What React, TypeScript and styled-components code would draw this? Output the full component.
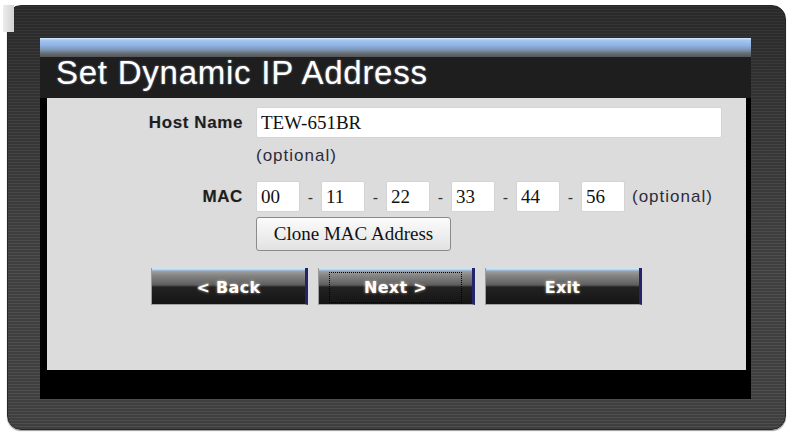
import React from 'react';
import styled, {createGlobalStyle} from "styled-components";

const GlobalStyle = createGlobalStyle`
  html, body {
    margin: 0;
    padding: 0;
    background: #ffffff;
  }
`

const macParts = ["00", "11", "22", "33", "44", "56"];

export default function App() {
    return (
        <>
            <GlobalStyle/>
            <Page>
                <CornerPatch/>
                <Frame>
                    <Panel>
                        <BlueBar/>
                        <TitleBar>
                            <Title>Set Dynamic IP Address</Title>
                        </TitleBar>
                        <Content>
                            <FieldRow $top={9}>
                                <Label>Host Name</Label>
                                <HostInput defaultValue="TEW-651BR"/>
                            </FieldRow>
                            <HintRow>
                                <span/>
                                <Hint>(optional)</Hint>
                            </HintRow>
                            <FieldRow $top={0}>
                                <Label>MAC</Label>
                                <MacGroup>
                                    {macParts.map((part, i) => (
                                        <React.Fragment key={i}>
                                            {i > 0 && <Dash>-</Dash>}
                                            <MacInput defaultValue={part}/>
                                        </React.Fragment>
                                    ))}
                                    <MacHint>(optional)</MacHint>
                                </MacGroup>
                            </FieldRow>
                            <FieldRow $top={5}>
                                <span/>
                                <div>
                                    <CloneButton>Clone MAC Address</CloneButton>
                                </div>
                            </FieldRow>
                            <NavRow>
                                <NavButton>&lt; Back</NavButton>
                                <NavButton>
                                    <FocusRing>Next &gt;</FocusRing>
                                </NavButton>
                                <NavButton>Exit</NavButton>
                            </NavRow>
                        </Content>
                    </Panel>
                </Frame>
            </Page>
        </>
    );
}

const Page = styled.div`
  position: relative;
  width: 787px;
  height: 434px;
  padding: 5px 0 0 7px;
  box-sizing: border-box;
`

const CornerPatch = styled.div`
  position: absolute;
  left: 3px;
  top: 5px;
  width: 11px;
  height: 27px;
  background: linear-gradient(to right, #ececec, #d2d2d2);
  z-index: 2;
`

const Frame = styled.div`
  width: 779px;
  height: 425px;
  box-sizing: border-box;
  padding: 33px 33px 29px 33px;
  border-radius: 14px;
  border: 1px solid #262626;
  background:
    linear-gradient(to bottom, rgba(0, 0, 0, 0.35) 0%, rgba(0, 0, 0, 0.15) 30%, rgba(0, 0, 0, 0) 60%),
    repeating-linear-gradient(to bottom, #4e4e4e 0 1px, #3f3f3f 1px 3px);
  box-shadow: 0 1px 1px rgba(0, 0, 0, 0.4);
`

const Panel = styled.div`
  width: 100%;
  height: 100%;
  margin: -1px 0 0 -1px;
  background: #000000;
  display: flex;
  flex-direction: column;
`

const BlueBar = styled.div`
  height: 19px;
  flex: none;
  background: linear-gradient(to bottom, #d8ecff 0, #a4c6f0 12%, #8db2e4 40%, #7d95b4 62%, #666b72 82%, #555555 100%);
`

const TitleBar = styled.div`
  height: 41px;
  flex: none;
  background: #1e1e1e;
  padding-left: 16px;
`

const Title = styled.h1`
  margin: 0;
  font-family: "Liberation Sans", Arial, sans-serif;
  font-weight: 400;
  font-size: 33px;
  letter-spacing: 0.75px;
  line-height: 31px;
  color: #ffffff;
  text-shadow: 0 0 2px rgba(190, 200, 230, 0.7);
`

const Content = styled.div`
  flex: 1;
  margin: 0 5px 29px 7px;
  background: #dcdcdc;
  display: flex;
  flex-direction: column;
`

const FieldRow = styled.div<{ $top: number }>`
  display: grid;
  grid-template-columns: 196px 1fr;
  column-gap: 13px;
  align-items: center;
  margin-top: ${p => p.$top}px;
  padding-right: 26px;
`

const HintRow = styled(FieldRow).attrs({$top: 0})`
  height: 43px;
  align-items: start;
`

const Label = styled.label`
  text-align: right;
  font-family: "Liberation Sans", Arial, sans-serif;
  font-weight: 700;
  font-size: 17px;
  letter-spacing: 0.6px;
  color: #1e1e1e;
  text-shadow: 0 0 1px rgba(60, 60, 90, 0.3);
`

const TextBox = styled.input`
  box-sizing: border-box;
  height: 31px;
  background: #ffffff;
  border: 1px solid #d4d4d4;
  border-radius: 2px;
  font-family: "Liberation Serif", "Times New Roman", serif;
  font-size: 19px;
  color: #111111;
  padding: 0 4px;
  outline: none;
`

const HostInput = styled(TextBox)`
  width: 466px;
`

const MacInput = styled(TextBox)`
  width: 44px;
`

const Hint = styled.span`
  padding-top: 8px;
  line-height: 20px;
  font-family: "Liberation Sans", Arial, sans-serif;
  font-size: 17px;
  letter-spacing: 1px;
  color: #2c2c3c;
`

const MacGroup = styled.div`
  display: flex;
  align-items: center;
`

const Dash = styled.span`
  width: 21px;
  padding-top: 2px;
  text-align: center;
  font-family: "Liberation Sans", Arial, sans-serif;
  font-size: 16px;
  color: #333333;
`

const MacHint = styled(Hint)`
  padding: 0 0 0 7px;
`

const CloneButton = styled.button`
  width: 195px;
  height: 34px;
  padding: 0;
  border: 1px solid #8a8a8a;
  border-radius: 3px;
  background: linear-gradient(to bottom, #fbfbfb 0%, #efefef 50%, #e2e2e2 100%);
  font-family: "Liberation Serif", "Times New Roman", serif;
  font-size: 19px;
  color: #111111;
`

const NavRow = styled.div`
  display: flex;
  justify-content: center;
  gap: 10px;
  margin-top: 17px;
`

const NavButton = styled.button`
  width: 157px;
  height: 37px;
  box-sizing: border-box;
  padding: 3px 0 0;
  border: none;
  border-left: 1px solid #9a9a9a;
  border-right: 3px solid #23236e;
  border-bottom: 1px solid #a4a4a4;
  background: linear-gradient(to bottom, #d4ecff 0, #a8cdf2 2px, #a0a0a0 3px, #868686 20%, #5e5e5e 47%, #222222 53%, #151515 100%);
  display: flex;
  align-items: center;
  justify-content: center;
  font-family: "DejaVu Sans", Verdana, sans-serif;
  font-weight: 700;
  font-size: 16px;
  letter-spacing: 0.3px;
  color: #ffffff;
  text-shadow: 0 0 3px rgba(255, 235, 200, 0.75);
`

const FocusRing = styled.span`
  display: flex;
  align-items: center;
  justify-content: center;
  width: 133px;
  height: 31px;
  margin-top: -1px;
  box-sizing: border-box;
  border: 1px dotted #000000;
`
